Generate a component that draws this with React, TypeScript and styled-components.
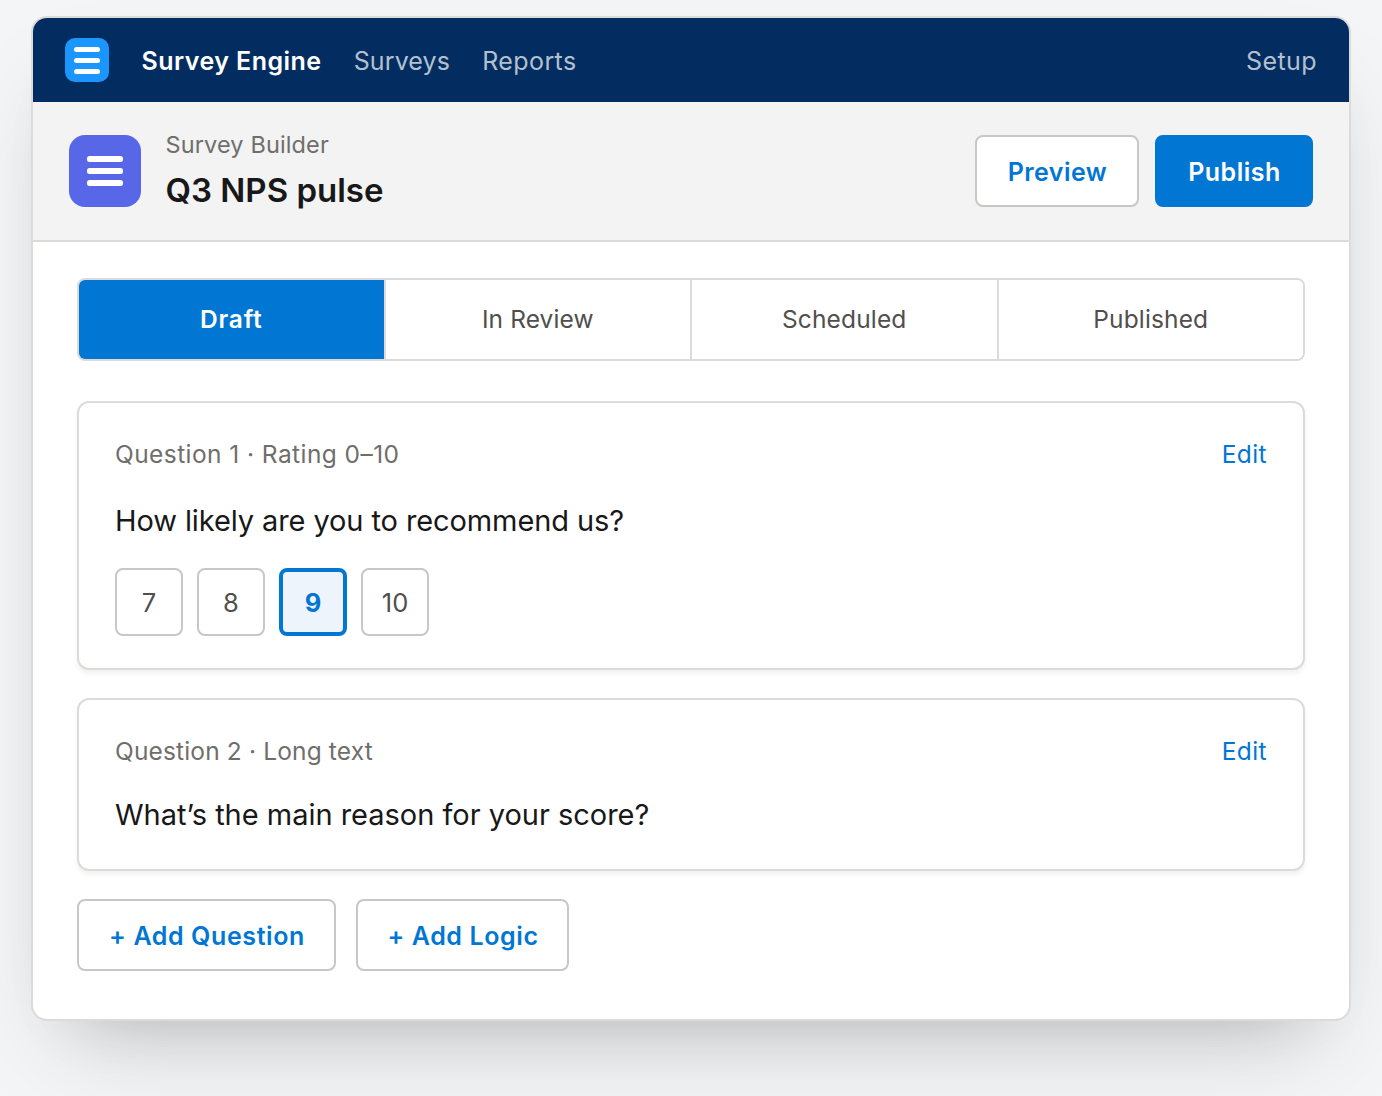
import React from "react";
import styled, { createGlobalStyle } from "styled-components";

const Global = createGlobalStyle`
  *, *::before, *::after { box-sizing: border-box; }
  body {
    margin: 0;
    background: #f4f5f7;
    font-family: Inter, "Liberation Sans", sans-serif;
    font-size: 25px;
    color: #181818;
    overflow: hidden;
  }
`;

const Page = styled.main`
  height: 1096px;
  padding: 16px 31px 75px;
  display: flex;
`;

const Window = styled.div`
  flex: 1;
  display: flex;
  flex-direction: column;
  border: 2px solid #dddbda;
  border-radius: 16px;
  background: #fff;
  overflow: hidden;
  box-shadow:
    0 48px 96px -32px rgba(0, 0, 0, 0.17),
    0 36px 64px -48px rgba(0, 0, 0, 0.18);
`;

const Nav = styled.nav`
  height: 84px;
  flex: none;
  display: flex;
  align-items: center;
  padding: 0 32px;
  gap: 32px;
  background: #032d60;
`;

const Text = styled.span<{ $track?: number }>`
  letter-spacing: ${(p) => p.$track ?? 0}px;
  white-space: nowrap;
`;

const Brand = styled(Text)`
  color: #fff;
  font-weight: 600;
  padding-top: 1px;
  margin-left: 0.6px;
`;

const NavLink = styled(Text)<{ $end?: boolean }>`
  color: #b3c0d0;
  padding-top: 1px;
  margin-left: ${(p) => (p.$end ? "auto" : "0.3px")};
`;

const Tile = styled.div<{ $size: number; $radius: number; $color: string; $gap: number }>`
  width: ${(p) => p.$size}px;
  height: ${(p) => p.$size}px;
  border-radius: ${(p) => p.$radius}px;
  background: ${(p) => p.$color};
  display: flex;
  flex: none;
  flex-direction: column;
  align-items: center;
  justify-content: center;
  gap: ${(p) => p.$gap}px;
`;

const Bar = styled.i<{ $w: number; $h: number }>`
  width: ${(p) => p.$w}px;
  height: ${(p) => p.$h}px;
  border-radius: 2.5px;
  background: #fff;
`;

const Header = styled.header`
  height: 140px;
  flex: none;
  display: flex;
  align-items: center;
  gap: 16px;
  padding: 0 36px;
  background: #f3f3f3;
  border-bottom: 2px solid #dddbda;
`;

const Titles = styled.div`
  flex: 1;
  display: flex;
  flex-direction: column;
  padding-left: 8.5px;
`;

const Eyebrow = styled(Text)`
  font-size: 23.5px;
  line-height: 38px;
  color: #706e6b;
`;

const Title = styled.h1`
  margin: 0;
  font-size: 33px;
  line-height: 52px;
  font-weight: 600;
  letter-spacing: 0;
`;

const Button = styled.button<{ $primary?: boolean; $w: number; $track: number }>`
  width: ${(p) => p.$w}px;
  height: 72px;
  padding: 1px 0 0 1px;
  border: 2px solid ${(p) => (p.$primary ? "#0176d3" : "#c9c7c5")};
  border-radius: 8px;
  background: ${(p) => (p.$primary ? "#0176d3" : "#fff")};
  color: ${(p) => (p.$primary ? "#fff" : "#0176d3")};
  font: 600 25px Inter, "Liberation Sans", sans-serif;
  letter-spacing: ${(p) => p.$track}px;
  white-space: nowrap;
`;

const Body = styled.section`
  display: flex;
  flex-direction: column;
  padding: 36px 44px;
`;

const Path = styled.div`
  height: 83px;
  display: flex;
  border: 2px solid #dddbda;
  border-radius: 8px;
  overflow: hidden;
  margin-bottom: 40px;
`;

const Stage = styled.div<{ $active?: boolean; $track: number }>`
  box-sizing: content-box;
  flex: 1 1 0;
  display: flex;
  align-items: center;
  justify-content: center;
  padding-bottom: 1px;
  font-size: 24.5px;
  letter-spacing: ${(p) => p.$track}px;
  font-weight: ${(p) => (p.$active ? 600 : 400)};
  color: ${(p) => (p.$active ? "#fff" : "#514f4d")};
  background: ${(p) => (p.$active ? "#0176d3" : "#fff")};
  border-right: 2px solid #dddbda;
  &:last-child { border-right: 0; }
`;

const Card = styled.article<{ $h: number }>`
  height: ${(p) => p.$h}px;
  margin-bottom: 28px;
  padding: 33px 36px;
  border: 2px solid #dddbda;
  border-radius: 12px;
  background: #fff;
  box-shadow: 0 4px 4px rgba(0, 0, 0, 0.05);
`;

const CardTop = styled.div`
  display: flex;
  justify-content: space-between;
  font-size: 24.5px;
  line-height: 36px;
  color: #706e6b;
`;

const Edit = styled(Text)`
  color: #0176d3;
`;

const Prompt = styled.div<{ $top: number; $track: number }>`
  margin-top: ${(p) => p.$top}px;
  font-size: 29px;
  line-height: 40px;
  letter-spacing: ${(p) => p.$track}px;
`;

const Scores = styled.div`
  display: flex;
  gap: 14px;
  margin-top: 27px;
`;

const Score = styled.div<{ $on?: boolean }>`
  width: 68px;
  height: 68px;
  display: flex;
  align-items: center;
  justify-content: center;
  border: ${(p) => (p.$on ? "4px solid #0176d3" : "2px solid #c9c7c5")};
  border-radius: 8px;
  background: ${(p) => (p.$on ? "#eef4fc" : "#fff")};
  color: ${(p) => (p.$on ? "#0176d3" : "#514f4d")};
  font-size: 25.5px;
  font-weight: ${(p) => (p.$on ? 700 : 400)};
`;

const Actions = styled.div`
  display: flex;
  gap: 20px;
`;

export default function App() {
  return (
    <Page>
      <Global />
      <Window>
        <Nav>
          <Tile $size={44} $radius={10} $color="#1b96ff" $gap={6}>
            <Bar $w={26} $h={5} />
            <Bar $w={26} $h={5} />
            <Bar $w={26} $h={5} />
          </Tile>
          <Brand $track={0.44}>Survey Engine</Brand>
          <NavLink $track={0.1}>Surveys</NavLink>
          <NavLink $track={0.38}>Reports</NavLink>
          <NavLink $end $track={0.4}>Setup</NavLink>
        </Nav>
        <Header>
          <Tile $size={72} $radius={16} $color="#5867e8" $gap={6}>
            <Bar $w={36} $h={6} />
            <Bar $w={36} $h={6} />
            <Bar $w={36} $h={6} />
          </Tile>
          <Titles>
            <Eyebrow $track={0.13}>Survey Builder</Eyebrow>
            <Title>Q3 NPS pulse</Title>
          </Titles>
          <Button $w={164} $track={0.45}>Preview</Button>
          <Button $w={158} $track={0.5} $primary>Publish</Button>
        </Header>
        <Body>
          <Path>
            <Stage $active $track={0.8}>Draft</Stage>
            <Stage $track={0.1}>In Review</Stage>
            <Stage $track={0.15}>Scheduled</Stage>
            <Stage $track={0.15}>Published</Stage>
          </Path>
          <Card $h={269}>
            <CardTop>
              <Text $track={0.43}>Question 1 · Rating 0–10</Text>
              <Edit $track={0.4}>Edit</Edit>
            </CardTop>
            <Prompt $top={29} $track={-0.1}>How likely are you to recommend us?</Prompt>
            <Scores>
              <Score>7</Score>
              <Score>8</Score>
              <Score $on>9</Score>
              <Score>10</Score>
            </Scores>
          </Card>
          <Card $h={173}>
            <CardTop>
              <Text $track={0.15}>Question 2 · Long text</Text>
              <Edit $track={0.4}>Edit</Edit>
            </CardTop>
            <Prompt $top={26} $track={-0.02}>What’s the main reason for your score?</Prompt>
          </Card>
          <Actions>
            <Button $w={259} $track={0.6}>+ Add Question</Button>
            <Button $w={213} $track={0.6}>+ Add Logic</Button>
          </Actions>
        </Body>
      </Window>
    </Page>
  );
}
